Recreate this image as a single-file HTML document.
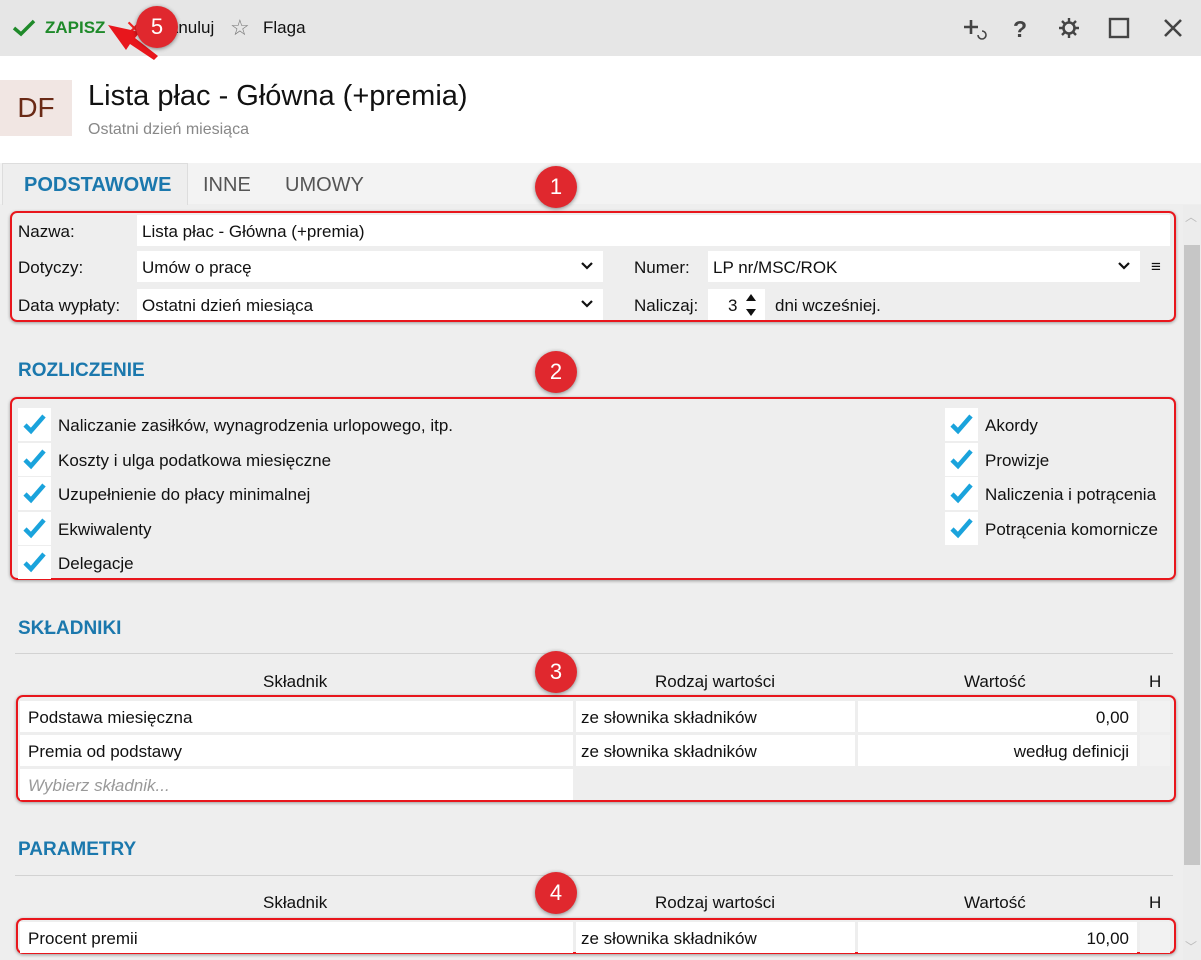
<!DOCTYPE html>
<html><head><meta charset="utf-8"><style>
*{box-sizing:border-box;margin:0;padding:0}
body{width:1201px;height:960px;overflow:hidden;background:#eee;font-family:"Liberation Sans",sans-serif;font-size:17px;color:#111;position:relative}
.a{position:absolute;white-space:nowrap}
.inp{position:absolute;background:#fff;height:31px;line-height:33px;padding-left:5px}
.lbl{position:absolute;line-height:33px}
.rb{position:absolute;border:2px solid #e8161c;border-radius:7px;box-shadow:0 1px 3px rgba(0,0,0,.35)}
.h{position:absolute;color:#1b78ad;font-weight:bold;font-size:19px}
.cb{position:absolute;width:33px;height:33px;background:#fff}
.cbt{position:absolute;line-height:35px}
.badge{position:absolute;width:42px;height:42px;border-radius:50%;background:#e0282e;color:#fff;font-size:22px;text-align:center;line-height:42px;box-shadow:0 1px 4px rgba(0,0,0,.45)}
.cell{position:absolute;background:#fff;height:31px;line-height:33px;padding:0 8px}
.dd{position:absolute;right:10px;top:11px;width:12px;height:8px}
</style></head><body>
<div class="a" style="left:0;top:0;width:1201px;height:56px;background:#e6e6e6"></div>
<svg class="a" style="left:12px;top:19px" width="24" height="18"><path d="M2 9 L9 15 L22 2" stroke="#1f8a2a" stroke-width="3.5" fill="none"/></svg>
<div class="a" style="left:45px;top:18px;color:#1f8a2a;font-weight:bold;font-size:17px">ZAPISZ</div>
<div class="a" style="left:125px;top:16px;color:#e22;font-size:22px">✕</div>
<div class="a" style="left:167px;top:18px;font-size:17px">Anuluj</div>
<div class="a" style="left:230px;top:15px;color:#777;font-size:22px">☆</div>
<div class="a" style="left:263px;top:18px;font-size:17px">Flaga</div>
<svg class="a" style="left:960px;top:16px" width="230" height="26" fill="none" stroke="#444" stroke-width="2.6">
<path d="M4 11H18M11 4V18"/><path d="M18 19a4 4 0 1 0 4-4" stroke-width="1.6"/>
<text x="53" y="21" font-family="Liberation Sans" font-weight="bold" font-size="23" fill="#444" stroke="none">?</text>
<circle cx="109" cy="12" r="5.5"/><path d="M109 2v4M109 18v4M99 12h4M115 12h4M102 5l3 3M113 16l3 3M116 5l-3 3M105 16l-3 3" stroke-width="2.4"/>
<rect x="150" y="3" width="18" height="18" stroke-width="2.4"/>
<path d="M205 4L221 20M221 4L205 20" stroke-width="2.6"/>
</svg>
<div class="a" style="left:0;top:56px;width:1201px;height:107px;background:#fff"></div>
<div class="a" style="left:0;top:80px;width:72px;height:56px;background:#f1e6e3;color:#6a2a16;font-size:28px;line-height:56px;text-align:center">DF</div>
<div class="a" style="left:88px;top:80px;font-size:29px">Lista płac - Główna (+premia)</div>
<div class="a" style="left:88px;top:121px;font-size:16px;color:#888">Ostatni dzień miesiąca</div>
<div class="a" style="left:0;top:163px;width:1201px;height:41px;background:#f3f3f3"></div>
<div class="a" style="left:2px;top:163px;width:186px;height:42px;background:#eee;border:1px solid #ddd;border-bottom:none"></div>
<div class="a" style="left:24px;top:174px;font-size:20px;font-weight:bold;color:#1b78ad">PODSTAWOWE</div>
<div class="a" style="left:203px;top:174px;font-size:20px;color:#555">INNE</div>
<div class="a" style="left:285px;top:174px;font-size:20px;color:#555">UMOWY</div>
<div class="a" style="left:1183px;top:205px;width:18px;height:755px;background:#ececec"></div>
<div class="a" style="left:1184px;top:245px;width:16px;height:620px;background:#c6c6c6"></div>
<div class="a" style="left:1185px;top:208px;color:#bbb;font-size:12px">︿</div>
<div class="a" style="left:1185px;top:938px;color:#bbb;font-size:12px">﹀</div>
<div class="rb" style="left:10px;top:211px;width:1166px;height:111px"></div>
<div class="lbl" style="left:18px;top:215px">Nazwa:</div>
<div class="inp" style="left:137px;top:215px;width:1033px">Lista płac - Główna (+premia)</div>
<div class="lbl" style="left:18px;top:251px">Dotyczy:</div>
<div class="inp" style="left:137px;top:251px;width:466px">Umów o pracę<svg class="dd" viewBox="0 0 12 8"><path d="M1 1L6 6L11 1" stroke="#111" stroke-width="2.2" fill="none"/></svg></div>
<div class="lbl" style="left:18px;top:289px">Data wypłaty:</div>
<div class="inp" style="left:137px;top:289px;width:466px">Ostatni dzień miesiąca<svg class="dd" viewBox="0 0 12 8"><path d="M1 1L6 6L11 1" stroke="#111" stroke-width="2.2" fill="none"/></svg></div>
<div class="lbl" style="left:634px;top:251px">Numer:</div>
<div class="inp" style="left:708px;top:251px;width:432px">LP nr/MSC/ROK<svg class="dd" viewBox="0 0 12 8"><path d="M1 1L6 6L11 1" stroke="#111" stroke-width="2.2" fill="none"/></svg></div>
<div class="lbl" style="left:1151px;top:250px;font-size:17px">≡</div>
<div class="lbl" style="left:634px;top:289px">Naliczaj:</div>
<div class="inp" style="left:708px;top:289px;width:57px;padding-left:20px">3</div>
<svg class="a" style="left:745px;top:292px" width="12" height="26"><path d="M1 9L6 2L11 9Z M1 17L6 24L11 17Z" fill="#111"/></svg>
<div class="lbl" style="left:775px;top:289px">dni wcześniej.</div>
<div class="h" style="left:18px;top:360px">ROZLICZENIE</div>
<div class="rb" style="left:10px;top:397px;width:1166px;height:183px"></div>
<div id="cbs"></div>
<div class="h" style="left:18px;top:618px">SKŁADNIKI</div>
<div class="a" style="left:15px;top:653px;width:1158px;height:1px;background:#d2d2d2"></div>
<div class="a" style="left:263px;top:672px">Składnik</div>
<div class="a" style="left:655px;top:672px">Rodzaj wartości</div>
<div class="a" style="left:964px;top:672px">Wartość</div>
<div class="a" style="left:1149px;top:672px">H</div>
<div class="rb" style="left:16px;top:695px;width:1160px;height:107px"></div>
<div class="cell" style="left:20px;top:701px;width:553px">Podstawa miesięczna</div>
<div class="cell" style="left:576px;top:701px;width:279px;padding-left:5px">ze słownika składników</div>
<div class="cell" style="left:858px;top:701px;width:279px;text-align:right">0,00</div>
<div class="cell" style="left:1140px;top:701px;width:30px;background:#f2f2f2"></div>
<div class="cell" style="left:20px;top:735px;width:553px">Premia od podstawy</div>
<div class="cell" style="left:576px;top:735px;width:279px;padding-left:5px">ze słownika składników</div>
<div class="cell" style="left:858px;top:735px;width:279px;text-align:right">według definicji</div>
<div class="cell" style="left:1140px;top:735px;width:30px;background:#f2f2f2"></div>
<div class="cell" style="left:20px;top:769px;width:553px;color:#999;font-style:italic">Wybierz składnik...</div>
<div class="h" style="left:18px;top:839px">PARAMETRY</div>
<div class="a" style="left:15px;top:875px;width:1158px;height:1px;background:#d2d2d2"></div>
<div class="a" style="left:263px;top:893px">Składnik</div>
<div class="a" style="left:655px;top:893px">Rodzaj wartości</div>
<div class="a" style="left:964px;top:893px">Wartość</div>
<div class="a" style="left:1149px;top:893px">H</div>
<div class="rb" style="left:16px;top:918px;width:1160px;height:36px"></div>
<div class="cell" style="left:20px;top:922px;width:553px">Procent premii</div>
<div class="cell" style="left:576px;top:922px;width:279px;padding-left:5px">ze słownika składników</div>
<div class="cell" style="left:858px;top:922px;width:279px;text-align:right">10,00</div>
<div class="cell" style="left:1140px;top:922px;width:30px;background:#f2f2f2"></div>
<div class="badge" style="left:535px;top:166px">1</div>
<div class="badge" style="left:535px;top:351px">2</div>
<div class="badge" style="left:535px;top:651px">3</div>
<div class="badge" style="left:535px;top:872px">4</div>
<svg class="a" style="left:100px;top:18px" width="70" height="45"><path d="M8 7 L40 14 L35 20 L58 38 L54 42 L30 26 L26 32 Z" fill="#e8161c"/></svg>
<div class="badge" style="left:136px;top:6px">5</div>
<script>
var L=["Naliczanie zasiłków, wynagrodzenia urlopowego, itp.","Koszty i ulga podatkowa miesięczne","Uzupełnienie do płacy minimalnej","Ekwiwalenty","Delegacje"],R=["Akordy","Prowizje","Naliczenia i potrącenia","Potrącenia komornicze"],Y=[408,443,477,512,546],h="";
function c(x,y,t){return '<div class="cb" style="left:'+x+'px;top:'+y+'px"><svg width="33" height="33"><path d="M7 17 L13 23 L26 8" stroke="#1aa3dc" stroke-width="4.5" fill="none"/></svg></div><div class="cbt" style="left:'+(x+40)+'px;top:'+y+'px">'+t+'</div>';}
L.forEach(function(t,i){h+=c(18,Y[i],t)});R.forEach(function(t,i){h+=c(945,Y[i],t)});
document.getElementById("cbs").innerHTML=h;
</script>
</body></html>
